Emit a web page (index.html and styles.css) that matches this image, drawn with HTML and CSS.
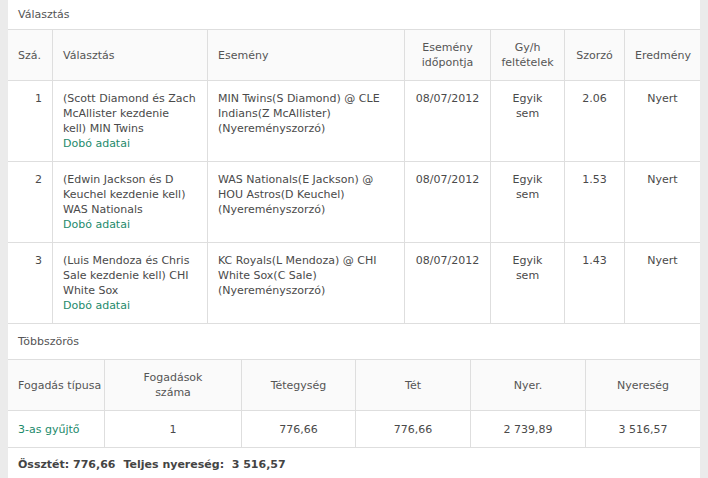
FILE: index.html
```html
<!DOCTYPE html>
<html lang="hu">
<head>
<meta charset="utf-8">
<title>Választás</title>
<link rel="stylesheet" href="styles.css">
</head>
<body>
<div class="panel">
  <div class="section-title">Választás</div>
  <table class="grid picks">
    <colgroup>
      <col class="c-no"><col class="c-sel"><col class="c-ev"><col class="c-date"><col class="c-cond"><col class="c-odds"><col class="c-res">
    </colgroup>
    <thead>
      <tr>
        <th class="left">Szá.</th>
        <th class="left">Választás</th>
        <th class="left">Esemény</th>
        <th>Esemény<br>időpontja</th>
        <th>Gy/h<br>feltételek</th>
        <th>Szorzó</th>
        <th>Eredmény</th>
      </tr>
    </thead>
    <tbody>
      <tr>
        <td class="right">1</td>
        <td class="left">(Scott Diamond és Zach McAllister kezdenie<br>kell) MIN Twins<br><a class="link" href="#">Dobó adatai</a></td>
        <td class="left">MIN Twins(S Diamond) @ CLE Indians(Z McAllister) (Nyereményszorzó)</td>
        <td>08/07/2012</td>
        <td>Egyik<br>sem</td>
        <td>2.06</td>
        <td>Nyert</td>
      </tr>
      <tr>
        <td class="right">2</td>
        <td class="left">(Edwin Jackson és D Keuchel kezdenie kell) WAS Nationals<br><a class="link" href="#">Dobó adatai</a></td>
        <td class="left">WAS Nationals(E Jackson) @ HOU Astros(D Keuchel) (Nyereményszorzó)</td>
        <td>08/07/2012</td>
        <td>Egyik<br>sem</td>
        <td>1.53</td>
        <td>Nyert</td>
      </tr>
      <tr>
        <td class="right">3</td>
        <td class="left">(Luis Mendoza és Chris Sale kezdenie kell) CHI White Sox<br><a class="link" href="#">Dobó adatai</a></td>
        <td class="left">KC Royals(L Mendoza) @ CHI White Sox(C Sale) (Nyereményszorzó)</td>
        <td>08/07/2012</td>
        <td>Egyik<br>sem</td>
        <td>1.43</td>
        <td>Nyert</td>
      </tr>
    </tbody>
  </table>
  <div class="section-title tall">Többszörös</div>
  <table class="grid multi">
    <colgroup>
      <col class="m-type"><col class="m-count"><col class="m-unit"><col class="m-stake"><col class="m-ret"><col class="m-win">
    </colgroup>
    <thead>
      <tr>
        <th class="left nowrap">Fogadás típusa</th>
        <th>Fogadások<br>száma</th>
        <th>Tétegység</th>
        <th>Tét</th>
        <th>Nyer.</th>
        <th>Nyereség</th>
      </tr>
    </thead>
    <tbody>
      <tr>
        <td class="left"><a class="link" href="#">3-as gyűjtő</a></td>
        <td>1</td>
        <td>776,66</td>
        <td>776,66</td>
        <td>2 739,89</td>
        <td>3 516,57</td>
      </tr>
    </tbody>
  </table>
  <div class="totals"><b>Össztét: 776,66</b><b class="gap">Teljes nyereség:&nbsp; 3 516,57</b></div>
</div>
</body>
</html>
```
FILE: styles.css
```css
html, body {
  margin: 0;
  padding: 0;
  background: #ebebeb;
}
body {
  font-family: "DejaVu Sans", Verdana, sans-serif;
  font-size: 11px;
  color: #4a4a4a;
}
.panel {
  width: 692px;
  margin-left: 8px;
  background: #fff;
  min-height: 478px;
}
.section-title {
  height: 29px;
  line-height: 29px;
  padding-left: 10px;
  border-bottom: 1px solid #dedede;
  color: #555;
}
.section-title.tall {
  height: 35px;
  line-height: 35px;
}
.grid {
  width: 692px;
  table-layout: fixed;
  border-collapse: separate;
  border-spacing: 0;
}
.grid th, .grid td {
  box-sizing: border-box;
  padding: 10px 10px;
  line-height: 15px;
  border-bottom: 1px solid #dedede;
  border-left: 1px solid #dedede;
  text-align: center;
  vertical-align: top;
  font-weight: normal;
}
.grid th {
  background: #fafafa;
  color: #555;
  vertical-align: middle;
  height: 51px;
}
.grid th:first-child, .grid td:first-child {
  border-left: 0;
}
.grid .left { text-align: left; }
.grid .right { text-align: right; }
.grid .nowrap { white-space: nowrap; padding-right: 0; }
.picks td { height: 81px; }
.multi td { height: 37px; padding-top: 11px; padding-bottom: 10px; }
.c-no { width: 44px; }
.c-sel { width: 155px; }
.c-ev { width: 197px; }
.c-date { width: 86px; }
.c-cond { width: 74px; }
.c-odds { width: 60px; }
.c-res { width: 76px; }
.m-type { width: 96px; }
.m-count { width: 137px; }
.m-unit { width: 114px; }
.m-stake { width: 115px; }
.m-ret { width: 115px; }
.m-win { width: 115px; }
.link {
  color: #1d8a6b;
  text-decoration: none;
}
.totals {
  padding: 9px 10px 0;
  line-height: 15px;
  color: #444;
}
.totals .gap { margin-left: 8px; }
```
